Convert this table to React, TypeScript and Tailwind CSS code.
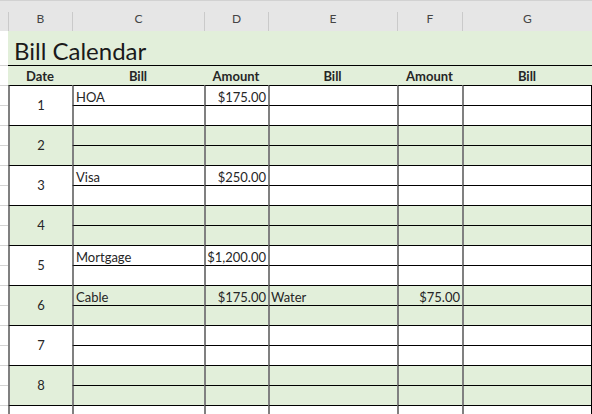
import React from 'react';

type Entry = { bill1?: string; amt1?: string; bill2?: string; amt2?: string; bill3?: string };

const cols = [
  { letter: 'B', w: 'w-[64px]' },
  { letter: 'C', w: 'w-[132px]' },
  { letter: 'D', w: 'w-[64px]' },
  { letter: 'E', w: 'w-[129px]' },
  { letter: 'F', w: 'w-[65px]' },
  { letter: 'G', w: 'w-[130px]' },
];

// two sub-rows per day, only the first one has something in it
const days: { day: number; top: Entry }[] = [
  { day: 1, top: { bill1: 'HOA', amt1: '$175.00' } },
  { day: 2, top: {} },
  { day: 3, top: { bill1: 'Visa', amt1: '$250.00' } },
  { day: 4, top: {} },
  { day: 5, top: { bill1: 'Mortgage', amt1: '$1,200.00' } },
  { day: 6, top: { bill1: 'Cable', amt1: '$175.00', bill2: 'Water', amt2: '$75.00' } },
  { day: 7, top: {} },
  { day: 8, top: {} },
];

function SubRow({ entry, bg }: { entry: Entry; bg: string }) {
  return (
    <div className={`flex h-[20px] ${bg}`}>
      <div className="w-[132px] h-full border-l-2 border-t border-l-[#808080] border-t-black flex items-end pl-[2px] pb-[1px] leading-none">
        {entry.bill1}
      </div>
      <div className="w-[64px] h-full border-l-2 border-t border-l-[#808080] border-t-black flex items-end justify-end pr-[2px] pb-[1px] leading-none">
        {entry.amt1}
      </div>
      <div className="w-[129px] h-full border-l-2 border-t border-l-[#808080] border-t-black flex items-end pl-[1px] pb-[1px] leading-none">
        {entry.bill2}
      </div>
      <div className="w-[65px] h-full border-l-2 border-t border-l-[#808080] border-t-black flex items-end justify-end pr-[2px] pb-[1px] leading-none">
        {entry.amt2}
      </div>
      <div className="w-[130px] h-full border-l-2 border-t border-r border-l-[#808080] border-t-black border-r-black flex items-end pl-[2px] pb-[1px] leading-none">
        {entry.bill3}
      </div>
    </div>
  );
}

export default function App() {
  return (
    <div
      className="w-[592px] h-[414px] overflow-hidden bg-white text-[13px] text-[#262626]"
      style={{ fontFamily: 'Lato, "Open Sans", sans-serif' }}
    >
      {/* column letters */}
      <div className="flex h-[31px] bg-[#e6e6e6] border-t border-[#d2d2d2] text-[12px] text-[#444]">
        <div className="w-[8px]" />
        {cols.map((c) => (
          <div key={c.letter} className={`${c.w} flex h-full`}>
            <div className="w-px h-[19px] self-end bg-[#cacaca]" />
            <div className="flex-1 flex items-center justify-center pt-[6px]">{c.letter}</div>
          </div>
        ))}
      </div>

      {/* title */}
      <div className="flex h-[34px]">
        <div className="w-[8px] bg-white" />
        <div className="flex-1 bg-[#e2efda] flex items-end pl-[6px] pb-[2px] text-[24px] leading-none text-[#1a1a1a]">
          Bill Calendar
        </div>
      </div>

      {/* column titles */}
      <div className="flex h-[20px] font-bold">
        <div className="w-[8px] border-t border-[#d4d4d4]" />
        <div className="flex-1 flex bg-[#e2efda] border-t border-black">
          <div className="w-[64px] flex items-end justify-center pb-[2px] leading-none">Date</div>
          <div className="w-[132px] flex items-end justify-center pb-[2px] leading-none">Bill</div>
          <div className="w-[64px] flex items-end justify-center pb-[2px] leading-none">Amount</div>
          <div className="w-[129px] flex items-end justify-center pb-[2px] leading-none">Bill</div>
          <div className="w-[65px] flex items-end justify-center pb-[2px] leading-none">Amount</div>
          <div className="w-[130px] flex items-end justify-center pb-[2px] leading-none">Bill</div>
        </div>
      </div>

      {days.map(({ day, top }) => {
        const bg = day % 2 === 0 ? 'bg-[#e2efda]' : 'bg-white';
        return (
          <div key={day} className="flex h-[40px]">
            <div className="w-[8px] flex flex-col">
              <div className="h-[20px] border-t border-[#d4d4d4]" />
              <div className="h-[20px] border-t border-[#d4d4d4]" />
            </div>
            <div className={`w-[64px] border-l-2 border-t border-l-[#808080] border-t-black flex items-center justify-center ${bg}`}>
              {day}
            </div>
            <div className="flex flex-col">
              <SubRow entry={top} bg={bg} />
              <SubRow entry={{}} bg={bg} />
            </div>
          </div>
        );
      })}

      {/* next row, cut off by the window */}
      <div className="flex h-[20px]">
        <div className="w-[8px] border-t border-[#d4d4d4]" />
        <div className="w-[64px] border-l-2 border-t border-l-[#808080] border-t-black" />
        <SubRow entry={{}} bg="bg-white" />
      </div>
    </div>
  );
}
